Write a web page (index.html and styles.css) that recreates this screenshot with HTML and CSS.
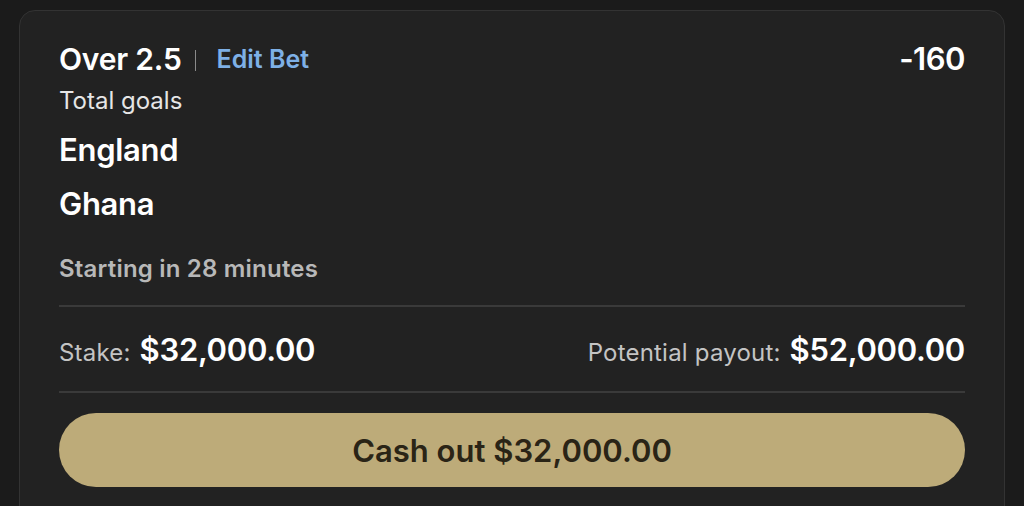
FILE: index.html
```html
<!DOCTYPE html>
<html>
<head>
<meta charset="utf-8">
<link rel="stylesheet" href="styles.css">
</head>
<body>
<div class="card">
  <div class="top">
    <div class="title-row">
      <span class="market">Over 2.5</span>
      <span class="sep"></span>
      <span class="edit">Edit Bet</span>
    </div>
    <span class="odds">-160</span>
  </div>
  <div class="sub">Total goals</div>
  <div class="team first">England</div>
  <div class="team">Ghana</div>
  <div class="start">Starting in 28 minutes</div>
  <div class="money">
    <div><span class="label">Stake:</span><span class="amt">$32,000.00</span></div>
    <div><span class="label">Potential payout:</span><span class="amt">$52,000.00</span></div>
  </div>
  <button class="cash">Cash out $32,000.00</button>
</div>
</body>
</html>
```

FILE: styles.css
```css
* { box-sizing: border-box; }
html, body { margin: 0; background: #1b1b1b; }
body {
  padding: 10px 19px 0 19px;
  font-family: Inter, "Noto Sans", sans-serif;
  color: #fff;
  height: 506px;
  overflow: hidden;
}
.card {
  background: #222222;
  border: 1px solid #333;
  border-radius: 16px;
  padding: 30px 39px 40px 39px;
}
.top {
  display: flex;
  justify-content: space-between;
  align-items: center;
  height: 36px;
}
.title-row { display: flex; align-items: center; }
.market { font-size: 30px; font-weight: 600; letter-spacing: -0.2px; line-height: 36px; }
.sep { width: 1px; height: 21px; background: #8a8a8a; margin: 2px 21px 0 13px; }
.edit { font-size: 25px; font-weight: 600; color: #7eb0e6; line-height: 36px; }
.odds { font-size: 31px; font-weight: 600; letter-spacing: -0.5px; line-height: 36px; }
.sub { font-size: 24px; color: #e6e6e6; margin-top: 9px; line-height: 30px; }
.team { font-size: 31px; font-weight: 600; line-height: 36px; margin-top: 18px; letter-spacing: -0.3px; }
.team.first { margin-top: 16px; }
.start {
  font-size: 24px; font-weight: 600; color: #b8b8b8;
  margin-top: 32px; line-height: 30px;
  padding-bottom: 21px;
  border-bottom: 2px solid #3a3a3a;
  letter-spacing: 0.2px;
}
.money {
  display: flex; justify-content: space-between; align-items: baseline;
  height: 86px; padding-top: 24px;
  border-bottom: 2px solid #3a3a3a;
}
.label { font-size: 24px; color: #c4c4c4; letter-spacing: 0.2px; }
.amt { font-size: 31px; font-weight: 600; color: #fff; letter-spacing: -0.3px; margin-left: 9px; }
.cash {
  display: block; width: 100%; margin-top: 20px;
  height: 74px; border: none; border-radius: 37px;
  background: #bdab79; color: #2a2416;
  font-family: inherit; font-size: 31px; font-weight: 600;
}
```
